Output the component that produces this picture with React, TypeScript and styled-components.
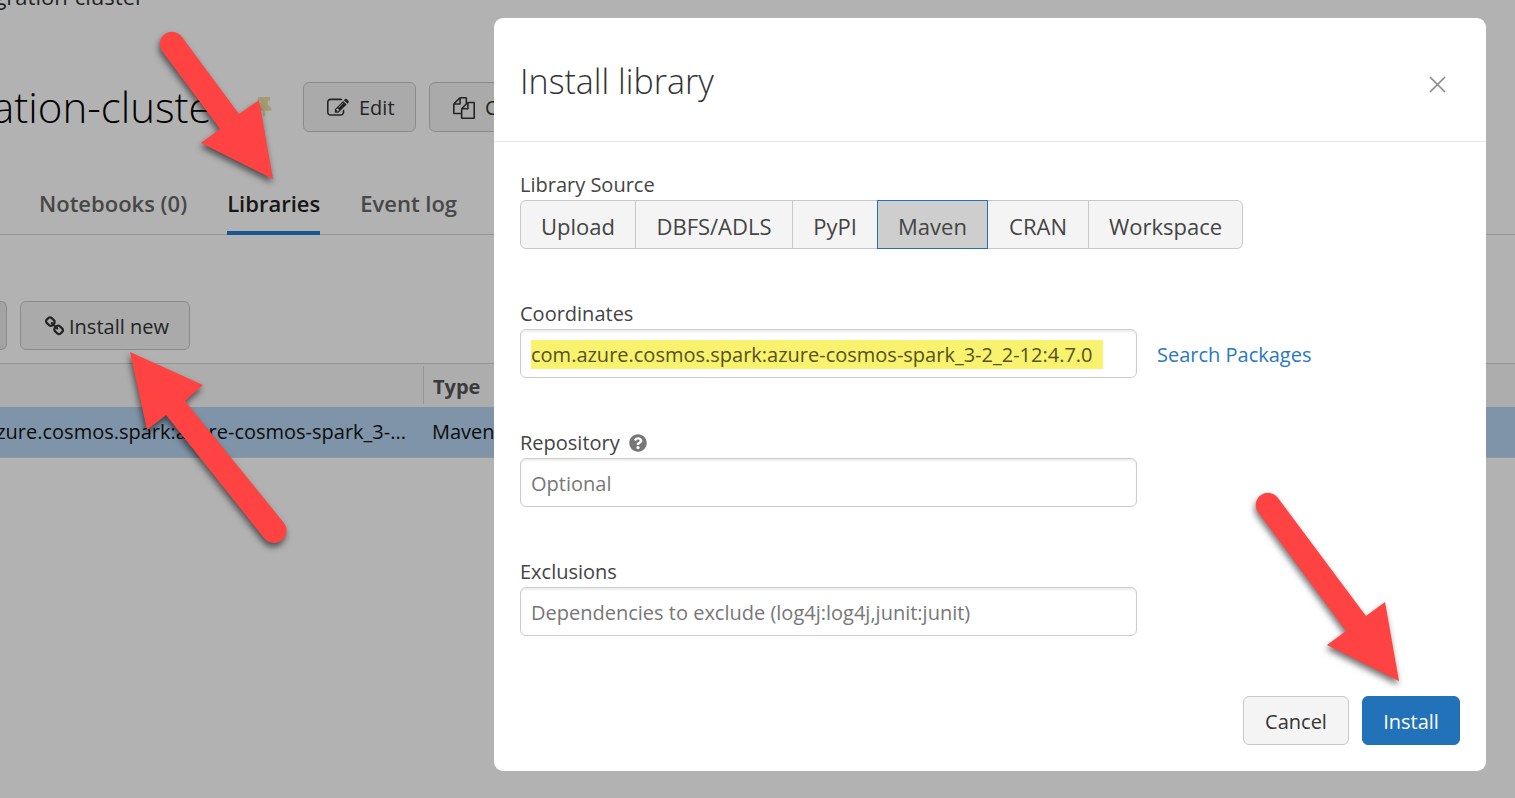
import React from "react";
import styled, { createGlobalStyle } from "styled-components";
import { FaQuestionCircle, FaThumbtack } from "react-icons/fa";

const GlobalStyle = createGlobalStyle`
  *, *::before, *::after { box-sizing: border-box; }
  body {
    margin: 0;
    background: #fff;
    color: #333;
    font-family: "Open Sans", "Noto Sans", sans-serif;
    font-size: 20px;
    line-height: 28px;
  }
  button, input { font: inherit; color: inherit; margin: 0; }
  svg { flex: none; }
`;

const Page = styled.div`
  position: relative;
  min-height: 100vh;
  overflow: hidden;
`;

/* ---------- cluster page behind the dialog ---------- */

const Cluster = styled.main`
  display: flex;
  flex-direction: column;
`;

const Breadcrumb = styled.nav`
  display: flex;
  justify-content: flex-end;
  width: 144px;
  height: 28px;
  margin-top: -18px;
  font-size: 22px;
  white-space: nowrap;
`;

const TitleRow = styled.div`
  display: flex;
  align-items: center;
  margin-top: 72px;
  height: 50px;
`;

const ClusterName = styled.h1`
  display: flex;
  justify-content: flex-end;
  width: 228px;
  margin: 0 26px 0 0;
  font-size: 42px;
  line-height: 50px;
  font-weight: 300;
  color: #000;
  white-space: nowrap;
`;

const Pin = styled.span`
  display: flex;
  width: 49px;
  font-size: 20px;
  color: #ecdfa4;
`;

const Button = styled.button<{ $primary?: boolean }>`
  display: inline-flex;
  align-items: center;
  justify-content: center;
  height: 49px;
  padding: 2px 20px 0;
  border: 1px solid ${(p) => (p.$primary ? "#2272b9" : "#c8c8c8")};
  border-radius: 6px;
  background: ${(p) => (p.$primary ? "#2272b9" : "#f4f4f4")};
  color: ${(p) => (p.$primary ? "#fff" : "#333")};
  font-weight: ${(p) => (p.$primary ? 500 : 400)};
  white-space: nowrap;
  cursor: pointer;
`;

const TitleButton = styled(Button)`
  justify-content: flex-start;
  width: 113px;
  height: 50px;
  gap: 10px;
  margin-right: 13px;
  padding: 2px 0 0 23px;
`;

const Tabs = styled.nav`
  display: flex;
  gap: 40px;
  height: 64px;
  margin-top: 39px;
  padding-left: 39px;
  border-bottom: 1px solid #d4d4d4;
`;

const Tab = styled.a<{ $active?: boolean }>`
  height: 64px;
  padding-top: 18px;
  border-bottom: 4px solid ${(p) => (p.$active ? "#267dce" : "transparent")};
  color: ${(p) => (p.$active ? "#222" : "#666")};
  font-size: 22px;
  font-weight: 600;
  text-decoration: none;
  white-space: nowrap;
`;

const Toolbar = styled.div`
  display: flex;
  gap: 13px;
  margin: 66px 0 13px;
`;

const CutButton = styled(Button)`
  width: 7px;
  padding: 0;
  border-left: 0;
  border-radius: 0 6px 6px 0;
  background: #eaeaea;
`;

const ToolbarButton = styled(Button)`
  justify-content: flex-start;
  width: 170px;
  gap: 4px;
  padding-left: 23px;
`;

const Libraries = styled.table`
  width: 100%;
  table-layout: fixed;
  border-collapse: collapse;
  border-top: 1px solid #d4d4d4;
  text-align: left;
  white-space: nowrap;
`;

const HeadCell = styled.th`
  height: 43px;
  padding: 2px 0 3px;
  background: #f8f8f8;
  color: #555;
  font-weight: 700;
`;

const TypeHead = styled.div`
  height: 38px;
  padding-left: 9px;
  border-left: 1px solid #d4d4d4;
  line-height: 42px;
`;

const Cell = styled.td`
  height: 50px;
  padding: 0 0 0 9px;
  background: #b6d5f1;
  border-bottom: 1px solid #cfdbe6;
  color: #111;
`;

const CutCell = styled(Cell)`
  padding: 0;
`;

const CutText = styled.div`
  display: flex;
  justify-content: flex-end;
  width: 406px;
`;

/* ---------- dialog ---------- */

const Backdrop = styled.div`
  position: absolute;
  inset: 0;
  display: flex;
  align-items: flex-start;
  padding: 18px 29px 0 494px;
  background: rgba(0, 0, 0, 0.3);
`;

const Dialog = styled.section`
  flex: 1;
  min-width: 0;
  border-radius: 9px;
  background: #fff;
`;

const DialogHeader = styled.header`
  display: flex;
  align-items: center;
  justify-content: space-between;
  height: 124px;
  padding: 2px 40px 0 26px;
  border-bottom: 1px solid #e8e8e8;
`;

const DialogTitle = styled.h2`
  margin: 0;
  font-size: 34px;
  line-height: 44px;
  font-weight: 300;
`;

const CloseButton = styled.button`
  display: flex;
  padding: 0;
  margin-top: 8px;
  border: 0;
  background: none;
  color: #888;
  cursor: pointer;
`;

const Form = styled.form`
  display: flex;
  flex-direction: column;
  gap: 52px;
  padding: 30px 26px 26px;
`;

const Field = styled.div`
  display: flex;
  flex-direction: column;
`;

const Label = styled.label`
  display: flex;
  align-items: center;
  gap: 9px;
  height: 28px;
  padding-bottom: 2px;
  color: #444;
  svg { color: #777; font-size: 18px; }
`;

const Segments = styled.div`
  display: grid;
  grid-template-columns: 115px 157px 85px 110px 101px 155px;
  height: 49px;
`;

const Segment = styled.button<{ $active?: boolean }>`
  position: relative;
  z-index: ${(p) => (p.$active ? 1 : 0)};
  margin-right: -1px;
  padding: 2px 0 0;
  border: 1px solid ${(p) => (p.$active ? "#2272b9" : "#c8c8c8")};
  background: ${(p) => (p.$active ? "#cecece" : "#f4f4f4")};
  color: #444;
  font-size: 22px;
  cursor: pointer;
  &:first-child { border-radius: 6px 0 0 6px; }
  &:last-child { border-radius: 0 6px 6px 0; margin-right: 0; }
`;

const InputRow = styled.div`
  display: flex;
  align-items: center;
  gap: 20px;
`;

const InputBox = styled.div`
  display: flex;
  align-items: center;
  width: 617px;
  height: 49px;
  padding: 2px 10px 0;
  border: 1px solid #ccc;
  border-radius: 6px;
  box-shadow: inset 0 2px 2px rgba(0, 0, 0, 0.07);
`;

const TextInput = styled.input<{ $marked?: boolean }>`
  width: ${(p) => (p.$marked ? "572px" : "100%")};
  height: 29px;
  padding: 0;
  border: 0;
  outline: 0;
  background: ${(p) => (p.$marked ? "#f8f26e" : "transparent")};
  color: #55531f;
  &::placeholder { color: #777; opacity: 1; }
`;

const Link = styled.a`
  padding-top: 2px;
  color: #2a78c0;
  text-decoration: none;
`;

const Actions = styled.footer`
  display: flex;
  justify-content: flex-end;
  gap: 13px;
  padding-top: 8px;
`;

const CancelButton = styled(Button)`
  width: 106px;
`;

const InstallButton = styled(Button)`
  width: 98px;
`;

/* ---------- callout arrows drawn over everything ---------- */

const Arrow = styled.svg<{ $x: number; $y: number }>`
  position: absolute;
  left: ${(p) => p.$x}px;
  top: ${(p) => p.$y}px;
  overflow: visible;
  pointer-events: none;
  fill: #ff4242;
  filter: drop-shadow(-1px 4px 3px rgba(0, 0, 0, 0.55));
`;

const EditIcon = () => (
  <svg width="22" height="22" viewBox="0 0 1792 1792" fill="currentColor" aria-hidden="true">
    <path d="M888 1184l116-116-152-152-116 116v56h96v96h56zM1328 464q-16-16-33 1l-350 350q-17 17-1 33t33-1l350-350q17-17 1-33zM1408 1058v190q0 119-84.500 203.500t-203.500 84.500h-832q-119 0-203.500-84.500t-84.500-203.500v-832q0-119 84.500-203.500t203.500-84.500h832q63 0 117 25 15 7 18 23 3 17-9 29l-49 49q-14 14-32 8-23-6-45-6h-832q-66 0-113 47t-47 113v832q0 66 47 113t113 47h832q66 0 113-47t47-113v-126q0-13 9-22l64-64q15-15 35-7t20 29zM1312 320l288 288-672 672h-288v-288zM1756 452l-92 92-288-288 92-92q28-28 68-28t68 28l152 152q28 28 28 68t-28 68z" />
  </svg>
);

const CopyIcon = () => (
  <svg width="22" height="22" viewBox="0 0 1792 1792" fill="currentColor" aria-hidden="true">
    <path d="M1696 384q40 0 68 28t28 68v1216q0 40-28 68t-68 28h-960q-40 0-68-28t-28-68v-288h-544q-40 0-68-28t-28-68v-672q0-40 20-88t48-76l408-408q28-28 76-48t88-20h416q40 0 68 28t28 68v328q68-40 128-40h416zM1152 597l-299 299h299v-299zM512 213l-299 299h299v-299zM708 860l316-316v-416h-384v416q0 40-28 68t-68 28h-416v640h512v-256q0-40 20-88t48-76zM1664 1664v-1152h-384v416q0 40-28 68t-68 28h-416v640h896z" />
  </svg>
);

const LinkIcon = () => (
  <svg width="21" height="21" viewBox="0 0 1792 1792" fill="currentColor" aria-hidden="true">
    <path d="M1520 1216q0-40-28-68l-208-208q-28-28-68-28-42 0-72 32 3 3 19 18.500t21.500 21.500 15 19 13 25.500 3.500 27.500q0 40-28 68t-68 28q-15 0-27.500-3.500t-25.500-13-19-15-21.500-21.500-18.500-19q-33 31-33 73 0 40 28 68l206 207q27 27 68 27 40 0 68-26l147-146q28-28 28-67zM817 511q0-40-28-68l-206-207q-28-28-68-28-39 0-68 27l-147 146q-28 28-28 67 0 40 28 68l208 208q27 27 68 27 42 0 72-31-3-3-19-18.500t-21.500-21.500-15-19-13-25.500-3.500-27.500q0-40 28-68t68-28q15 0 27.500 3.500t25.500 13 19 15 21.500 21.500 18.500 19q33-31 33-73zM1712 1216q0 120-85 203l-147 146q-83 83-203 83-121 0-204-85l-206-207q-83-83-83-203 0-123 88-209l-88-88q-86 88-208 88-120 0-204-84l-208-208q-84-84-84-204t85-203l147-146q83-83 203-83 121 0 204 85l206 207q83 83 83 203 0 123-88 209l88 88q86-88 208-88 120 0 204 84l208 208q84 84 84 204z" />
  </svg>
);

const sources = ["Upload", "DBFS/ADLS", "PyPI", "Maven", "CRAN", "Workspace"];

export default function App() {
  return (
    <Page>
      <GlobalStyle />
      <Cluster>
        <Breadcrumb>gration-cluster</Breadcrumb>
        <TitleRow>
          <ClusterName>ation-cluster</ClusterName>
          <Pin><FaThumbtack /></Pin>
          <TitleButton><EditIcon />Edit</TitleButton>
          <TitleButton><CopyIcon />Clone</TitleButton>
        </TitleRow>
        <Tabs>
          <Tab href="#notebooks">Notebooks (0)</Tab>
          <Tab href="#libraries" $active>Libraries</Tab>
          <Tab href="#events">Event log</Tab>
        </Tabs>
        <Toolbar>
          <CutButton aria-label="Uninstall" />
          <ToolbarButton><LinkIcon />Install new</ToolbarButton>
        </Toolbar>
        <Libraries>
          <colgroup>
            <col width="423" />
            <col />
          </colgroup>
          <thead>
            <tr>
              <HeadCell aria-label="Name" />
              <HeadCell><TypeHead>Type</TypeHead></HeadCell>
            </tr>
          </thead>
          <tbody>
            <tr>
              <CutCell><CutText>zure.cosmos.spark:azure-cosmos-spark_3-...</CutText></CutCell>
              <Cell>Maven</Cell>
            </tr>
          </tbody>
        </Libraries>
      </Cluster>

      <Backdrop>
        <Dialog role="dialog" aria-labelledby="dialog-title">
          <DialogHeader>
            <DialogTitle id="dialog-title">Install library</DialogTitle>
            <CloseButton aria-label="Close">
              <svg width="17" height="17" viewBox="0 0 17 17" stroke="currentColor" strokeWidth="1.6" aria-hidden="true">
                <path d="M1 1L16 16M16 1L1 16" />
              </svg>
            </CloseButton>
          </DialogHeader>
          <Form onSubmit={(e) => e.preventDefault()}>
            <Field>
              <Label as="span" id="source-label">Library Source</Label>
              <Segments role="group" aria-labelledby="source-label">
                {sources.map((name) => (
                  <Segment key={name} type="button" $active={name === "Maven"} aria-pressed={name === "Maven"}>
                    {name}
                  </Segment>
                ))}
              </Segments>
            </Field>
            <Field>
              <Label htmlFor="coordinates">Coordinates</Label>
              <InputRow>
                <InputBox>
                  <TextInput
                    id="coordinates"
                    $marked
                    spellCheck={false}
                    defaultValue="com.azure.cosmos.spark:azure-cosmos-spark_3-2_2-12:4.7.0"
                  />
                </InputBox>
                <Link href="#search">Search Packages</Link>
              </InputRow>
            </Field>
            <Field>
              <Label htmlFor="repository">Repository <FaQuestionCircle /></Label>
              <InputBox>
                <TextInput id="repository" placeholder="Optional" />
              </InputBox>
            </Field>
            <Field>
              <Label htmlFor="exclusions">Exclusions</Label>
              <InputBox>
                <TextInput id="exclusions" placeholder="Dependencies to exclude (log4j:log4j,junit:junit)" />
              </InputBox>
            </Field>
            <Actions>
              <CancelButton type="button">Cancel</CancelButton>
              <InstallButton type="submit" $primary>Install</InstallButton>
            </Actions>
          </Form>
        </Dialog>
      </Backdrop>

      <Arrow $x={160} $y={32} width="113" height="148" viewBox="160 32 113 148" aria-hidden="true">
        <path d="M162 51A12 12 0 0 1 182 37L239 114L259 100L273 179L201 143L220 129Z" />
      </Arrow>
      <Arrow $x={130} $y={352} width="156" height="191" viewBox="130 352 156 191" aria-hidden="true">
        <path d="M130 352L203 385L185 401L284 523A12 12 0 0 1 264 538L166 415L147 430Z" />
      </Arrow>
      <Arrow $x={1256} $y={493} width="143" height="188" viewBox="1256 493 143 188" aria-hidden="true">
        <path d="M1258 512A12 12 0 0 1 1278 498L1366 616L1385 602L1399 681L1327 645L1346 631Z" />
      </Arrow>
    </Page>
  );
}
